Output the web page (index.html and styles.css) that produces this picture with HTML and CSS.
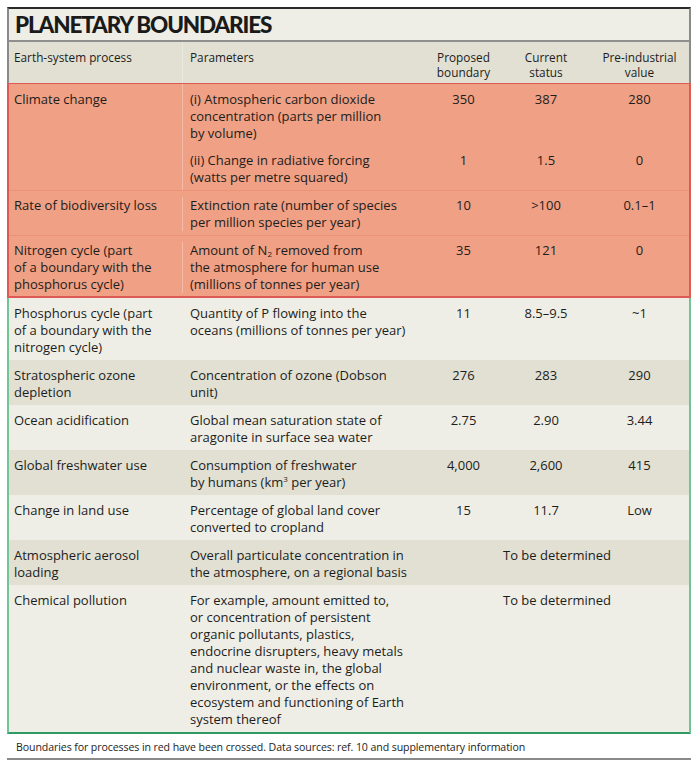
FILE: index.html
```html
<!DOCTYPE html>
<html>
<head>
<meta charset="utf-8">
<link rel="stylesheet" href="styles.css">
</head>
<body>
<div class="frame">
  <div class="title-bar"><h1>PLANETARY BOUNDARIES</h1></div>
  <div class="row head">
    <div class="c1">Earth-system process</div>
    <div class="c2">Parameters</div>
    <div class="num">Proposed<br>boundary</div>
    <div class="num">Current<br>status</div>
    <div class="num">Pre-industrial<br>value</div>
  </div>
  <div class="block red">
    <div class="row red-row split">
      <div class="c1">Climate change</div>
      <div class="sub">
        <div class="subrow">
          <div class="c2">(i) Atmospheric carbon dioxide<br>concentration (parts per million<br>by volume)</div>
          <div class="num">350</div>
          <div class="num">387</div>
          <div class="num">280</div>
        </div>
        <div class="subrow">
          <div class="c2">(ii) Change in radiative forcing<br>(watts per metre squared)</div>
          <div class="num">1</div>
          <div class="num">1.5</div>
          <div class="num">0</div>
        </div>
      </div>
    </div>
    <div class="row red-row">
      <div class="c1">Rate of biodiversity loss</div>
      <div class="c2">Extinction rate (number of species<br>per million species per year)</div>
      <div class="num">10</div>
      <div class="num">&gt;100</div>
      <div class="num">0.1–1</div>
    </div>
    <div class="row red-row">
      <div class="c1">Nitrogen cycle (part<br>of a boundary with the<br>phosphorus cycle)</div>
      <div class="c2">Amount of N<sub>2</sub> removed from<br>the atmosphere for human use<br>(millions of tonnes per year)</div>
      <div class="num">35</div>
      <div class="num">121</div>
      <div class="num">0</div>
    </div>
  </div>
  <div class="block green">
    <div class="row light">
      <div class="c1">Phosphorus cycle (part<br>of a boundary with the<br>nitrogen cycle)</div>
      <div class="c2">Quantity of P flowing into the<br>oceans (millions of tonnes per year)</div>
      <div class="num">11</div>
      <div class="num">8.5–9.5</div>
      <div class="num">~1</div>
    </div>
    <div class="row dark">
      <div class="c1">Stratospheric ozone<br>depletion</div>
      <div class="c2">Concentration of ozone (Dobson<br>unit)</div>
      <div class="num">276</div>
      <div class="num">283</div>
      <div class="num">290</div>
    </div>
    <div class="row light">
      <div class="c1">Ocean acidification</div>
      <div class="c2">Global mean saturation state of<br>aragonite in surface sea water</div>
      <div class="num">2.75</div>
      <div class="num">2.90</div>
      <div class="num">3.44</div>
    </div>
    <div class="row dark">
      <div class="c1">Global freshwater use</div>
      <div class="c2">Consumption of freshwater<br>by humans (km<sup>3</sup> per year)</div>
      <div class="num">4,000</div>
      <div class="num">2,600</div>
      <div class="num">415</div>
    </div>
    <div class="row light">
      <div class="c1">Change in land use</div>
      <div class="c2">Percentage of global land cover<br>converted to cropland</div>
      <div class="num">15</div>
      <div class="num">11.7</div>
      <div class="num">Low</div>
    </div>
    <div class="row dark">
      <div class="c1">Atmospheric aerosol<br>loading</div>
      <div class="c2">Overall particulate concentration in<br>the atmosphere, on a regional basis</div>
      <div class="num span">To be determined</div>
    </div>
    <div class="row light">
      <div class="c1">Chemical pollution</div>
      <div class="c2">For example, amount emitted to,<br>or concentration of persistent<br>organic pollutants, plastics,<br>endocrine disrupters, heavy metals<br>and nuclear waste in, the global<br>environment, or the effects on<br>ecosystem and functioning of Earth<br>system thereof</div>
      <div class="num span">To be determined</div>
    </div>
  </div>
  <p class="note">Boundaries for processes in red have been crossed. Data sources: ref. 10 and supplementary information</p>
  <div class="rule"></div>
</div>
</body>
</html>
```

FILE: styles.css
```css
html, body {
  margin: 0;
  padding: 0;
  background: #ffffff;
}
body {
  font-family: "Open Sans", Lato, sans-serif;
  color: #1d1d1b;
  height: 766px;
  overflow: hidden;
}
.frame {
  margin: 7px 0 0 7px;
  width: 684px;
}
.title-bar {
  background: #efeee6;
  border-top: 2px solid #2a2a2a;
  border-left: 2px solid #8a8a8a;
  border-right: 2px solid #8a8a8a;
  border-bottom: 2px solid #8f8f8f;
  height: 31px;
  padding-left: 6px;
}
h1 {
  margin: 0;
  font-family: Lato, sans-serif;
  font-weight: 900;
  font-size: 22.5px;
  line-height: 32px;
  letter-spacing: -1.15px;
  color: #1a1a1a;
}
.row {
  display: grid;
  grid-template-columns: 174px 242px 77px 88px 1fr;
  font-size: 13px;
  line-height: 17px;
  padding: 6.5px 0 4.5px;
}
.row .c1 { padding-left: 5px; }
.row .c2 { padding-left: 7px; }
.num { text-align: center; }
.span { grid-column: 3 / 6; }
.head {
  background: #e1e0d3;
  border-left: 2px solid #8a8a8a;
  border-right: 2px solid #8a8a8a;
  font-size: 11.8px;
  line-height: 15px;
  padding: 7.5px 0 3.5px;
  height: 30px;
}
.head .c2, .red-row > .c2, .red-row .sub {
  box-shadow: -1px 0 0 rgba(255,255,255,0.3);
}
.head .c2 { margin: -7.5px 0 -3.5px; padding-top: 7.5px; }
.block.red {
  background: #f0a084;
  border: 2px solid #dd5a55;
  border-top-width: 1px;
}
.red-row { box-shadow: inset 0 1px 0 #ec9276; }
.red-row:first-child { box-shadow: none; }
.red-row:last-child { padding-bottom: 3.5px; }
.split {
  padding: 0;
}
.split > .c1 { padding-top: 6.5px; }
.sub {
  grid-column: 2 / 6;
  display: flex;
  flex-direction: column;
}
.subrow {
  display: grid;
  grid-template-columns: 242px 77px 88px 1fr;
  padding: 6.5px 0 4px;
}
.block.green {
  border-left: 2px solid #72c496;
  border-right: 2px solid #72c496;
  border-bottom: 2px solid #2f9a62;
}
.light { background: #efeee6; }
.dark { background: #e1e0d3; }
sub, sup {
  font-size: 8px;
  line-height: 0;
}
sub { vertical-align: -2px; }
sup { vertical-align: 5px; }
.note {
  margin: 0;
  padding: 5px 0 0 9px;
  font-size: 10.6px;
  line-height: 16px;
  height: 19px;
  letter-spacing: -0.1px;
}
.rule {
  height: 2px;
  background: #8a8a8a;
}
```
